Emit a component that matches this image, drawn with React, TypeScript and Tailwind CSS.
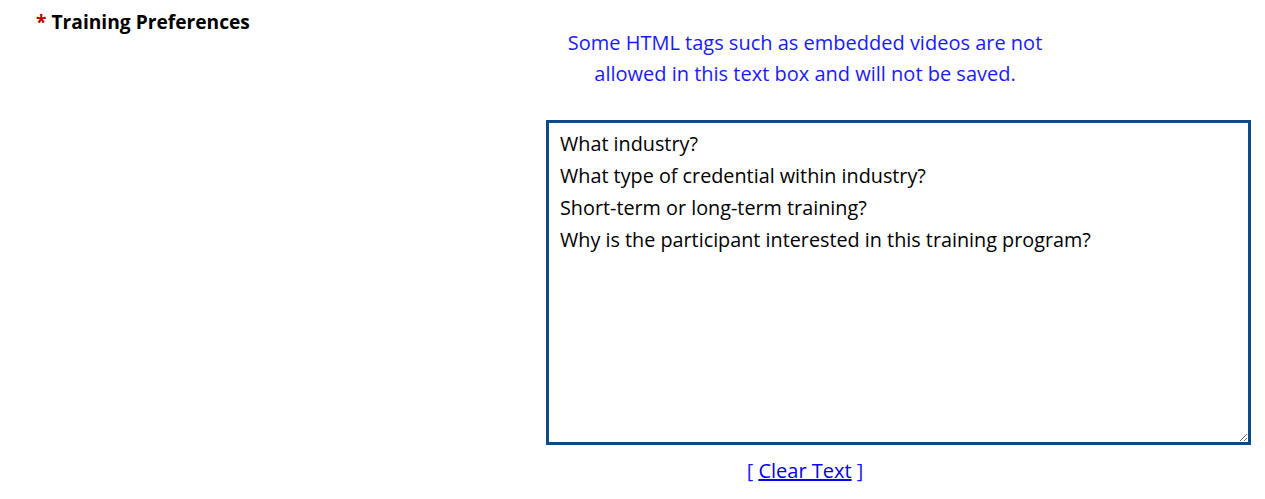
const PROMPTS = [
  "What industry?",
  "What type of credential within industry?",
  "Short-term or long-term training?",
  "Why is the participant interested in this training program?",
].join("\n");

export default function App() {
  return (
    <div
      className="w-[1265px] h-[499px] bg-white flex text-black"
      style={{ fontFamily: '"Open Sans", "Noto Sans", sans-serif' }}
    >
      {/* Label column */}
      <div className="w-[546px] shrink-0 pl-[36px] pt-[8px]">
        <span className="text-[19.2px] font-bold leading-[28px]">
          <span className="text-[#c00000] mr-[5px]">*</span>
          Training Preferences
        </span>
      </div>

      {/* Field column */}
      <div className="flex flex-col">
        <div className="w-[518px] text-center text-[20px] leading-[31px] text-[#1a1aff] pt-[27px]">
          Some HTML tags such as embedded videos are not
          <br />
          allowed in this text box and will not be saved.
        </div>
        <textarea
          defaultValue={PROMPTS}
          className="mt-[31px] w-[705px] h-[325px] border-[3px] border-[#0f4a85] px-[11px] pt-[5px] text-[19.8px] leading-[32px] outline-none resize"
          style={{ fontFamily: '"Open Sans", "Noto Sans", sans-serif' }}
        />
        <div className="w-[518px] text-center text-[20px] leading-[28px] mt-[12px] text-[#1a1aff]">
          [{" "}
          <a href="#" className="underline text-[#0000ee]">
            Clear Text
          </a>{" "}
          ]
        </div>
      </div>
    </div>
  );
}
